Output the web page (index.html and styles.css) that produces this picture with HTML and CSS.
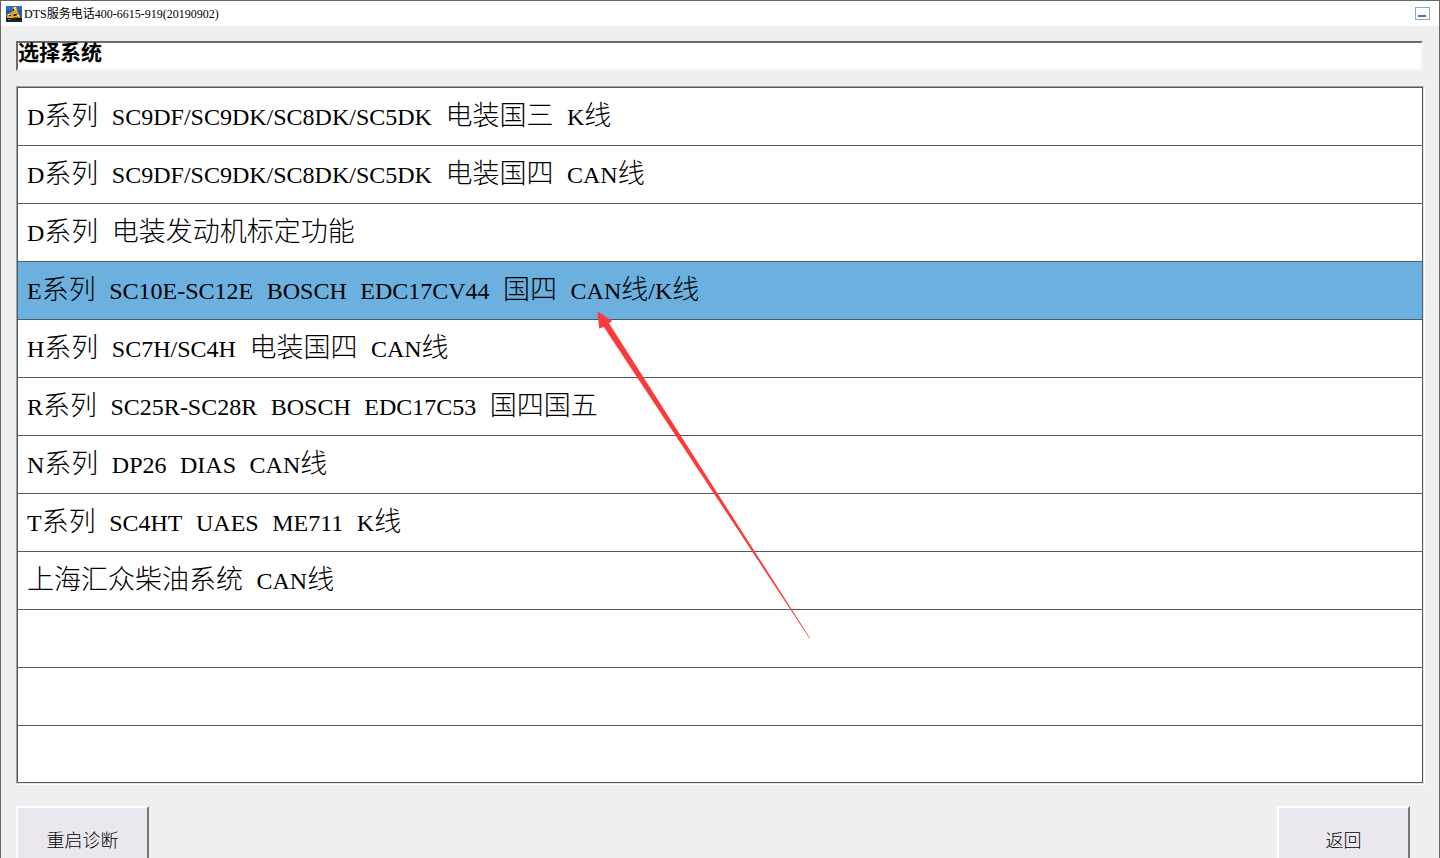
FILE: index.html
```html
<!DOCTYPE html>
<html lang="zh-CN">
<head>
  <meta charset="UTF-8" />
  <meta name="viewport" content="width=device-width, initial-scale=1.0"/>
  <title>DTS</title>
  <link rel="stylesheet" href="styles.css">
</head>
<body>
  <div class="window">
    <header class="title-bar">
      <svg class="app-icon" viewBox="0 0 16 16" aria-hidden="true">
        <rect width="16" height="16" fill="#2458a8"/>
        <rect width="16" height="4" fill="#2b6fc0"/>
        <path d="M0 12h3l2-2h7l4 3v3H0z" fill="#16213a"/>
        <path d="M7 1h3l1 2 1 4 2 3v2h-3l-1-1-3 1-2 1-2 0H1V9l3-2 2-1 1-2z" fill="#e5a51c"/>
        <path d="M7 3h1v2H7zM8 8h3v1l-2 1H7zM3 9h2v1H3z" fill="#2a1c12"/>
        <path d="M8 1h2v3H8zM2 8h2v1H2zM11 9h2v1h-2z" fill="#ffe04a"/>
        <path d="M1 12h5v2H1zM10 12h5v2h-5z" fill="#0c0f18"/>
        <path d="M2 13h3v1H2zM9 11h3v1H9z" fill="#a8651a"/>
      </svg>
      <span class="title"><span class="latin">DTS</span>服务电话<span class="latin">400-6615-919(20190902)</span></span>
      <button class="minimize-btn" type="button" aria-label="最小化"></button>
    </header>

    <main class="content">
      <h1 class="caption">选择系统</h1>

      <ul class="system-list">
        <li><button type="button"><span class="latin">D</span>系列&ensp;<span class="latin">SC9DF/SC9DK/SC8DK/SC5DK</span>&ensp;电装国三&ensp;<span class="latin">K</span>线</button></li>
        <li><button type="button"><span class="latin">D</span>系列&ensp;<span class="latin">SC9DF/SC9DK/SC8DK/SC5DK</span>&ensp;电装国四&ensp;<span class="latin">CAN</span>线</button></li>
        <li><button type="button"><span class="latin">D</span>系列&ensp;电装发动机标定功能</button></li>
        <li class="selected"><button type="button"><span class="latin">E</span>系列&ensp;<span class="latin">SC10E-SC12E</span>&ensp;<span class="latin">BOSCH</span>&ensp;<span class="latin">EDC17CV44</span>&ensp;国四&ensp;<span class="latin">CAN</span>线<span class="latin">/K</span>线</button></li>
        <li><button type="button"><span class="latin">H</span>系列&ensp;<span class="latin">SC7H/SC4H</span>&ensp;电装国四&ensp;<span class="latin">CAN</span>线</button></li>
        <li><button type="button"><span class="latin">R</span>系列&ensp;<span class="latin">SC25R-SC28R</span>&ensp;<span class="latin">BOSCH</span>&ensp;<span class="latin">EDC17C53</span>&ensp;国四国五</button></li>
        <li><button type="button"><span class="latin">N</span>系列&ensp;<span class="latin">DP26</span>&ensp;<span class="latin">DIAS</span>&ensp;<span class="latin">CAN</span>线</button></li>
        <li><button type="button"><span class="latin">T</span>系列&ensp;<span class="latin">SC4HT</span>&ensp;<span class="latin">UAES</span>&ensp;<span class="latin">ME711</span>&ensp;<span class="latin">K</span>线</button></li>
        <li><button type="button">上海汇众柴油系统&ensp;<span class="latin">CAN</span>线</button></li>
        <li></li>
        <li></li>
        <li></li>
      </ul>

      <div class="actions">
        <button type="button">重启诊断</button>
        <button type="button">返回</button>
      </div>
    </main>

    <!-- arrow pointing at the selected system -->
    <svg class="arrow" viewBox="0 0 214 328" aria-hidden="true">
      <path d="M0.3 0.3L15.3 10L12 12.3L213 327L212.4 327.2L6.7 15.7L2.3 17.7z" fill="#fb3a3a"/>
    </svg>
  </div>
</body>
</html>
```
FILE: styles.css
```css
* {
  box-sizing: border-box;
}

body {
  margin: 0;
  font-family: "Noto Sans CJK SC", sans-serif;
  font-weight: 300;
  color: #000;
  background-color: #efefef;
}

button {
  font-family: inherit;
  font-weight: inherit;
  color: inherit;
}

.latin {
  font-family: "Liberation Serif", serif;
}

.window {
  position: relative;
  height: 100vh;
  overflow: hidden;
  border: 1px solid #666;
  border-bottom: none;
}

/* title bar */
.title-bar {
  display: flex;
  align-items: center;
  height: 25px;
  padding: 0 9px 0 5px;
  background: #fff;
}

.app-icon {
  width: 16px;
  height: 16px;
  margin-right: 2px;
}

.title {
  flex: 1;
  font-size: 12px;
  font-weight: 400;
  line-height: 16px;
  white-space: nowrap;
}

.minimize-btn {
  width: 15px;
  height: 13px;
  padding: 7px 3px 2px 2px;
  border: 1px solid #8aabc4;
  background: #4f74ad content-box;
}

/* content */
.content {
  padding: 15px 15px 0;
}

.caption {
  height: 30px;
  margin: 0 1px 15px 0;
  border: 2px solid;
  border-color: #6b6b6b #f4f4f4 #f4f4f4 #6b6b6b;
  background: #fff;
  font-size: 21px;
  font-weight: bold;
  line-height: 16px;
}

.system-list {
  margin: 0;
  padding: 1px 1px 0;
  list-style: none;
  background: #fff;
  border: 1px solid;
  border-color: #a0a0a0 #e3e3e3 #e3e3e3 #a0a0a0;
  box-shadow: inset 1px 1px 0 #4c5c66, inset -1px 0 0 #4c5c66, 1px 1px 0 #fff;
}

.system-list li {
  height: 58px;
  border-bottom: 1px solid #4c5c66;
}

.system-list li:last-child {
  height: 57px;
}

.system-list li.selected {
  background: #6bb0de;
}

.system-list button {
  display: block;
  width: 100%;
  height: 100%;
  padding: 0 9px 2px;
  border: none;
  background: none;
  font-size: 27px;
  line-height: 40px;
  text-align: left;
  white-space: nowrap;
}

.system-list .latin {
  font-size: 24px;
}

.actions {
  display: flex;
  justify-content: space-between;
  padding: 22px 14px 0 0;
}

.actions button {
  width: 133px;
  height: 66px;
  border: 2px solid;
  border-color: #fff #777 #777 #fff;
  background: #eae8ee;
  font-size: 18px;
}

.arrow {
  position: absolute;
  left: 596px;
  top: 310px;
  width: 214px;
  height: 328px;
  pointer-events: none;
}
```
